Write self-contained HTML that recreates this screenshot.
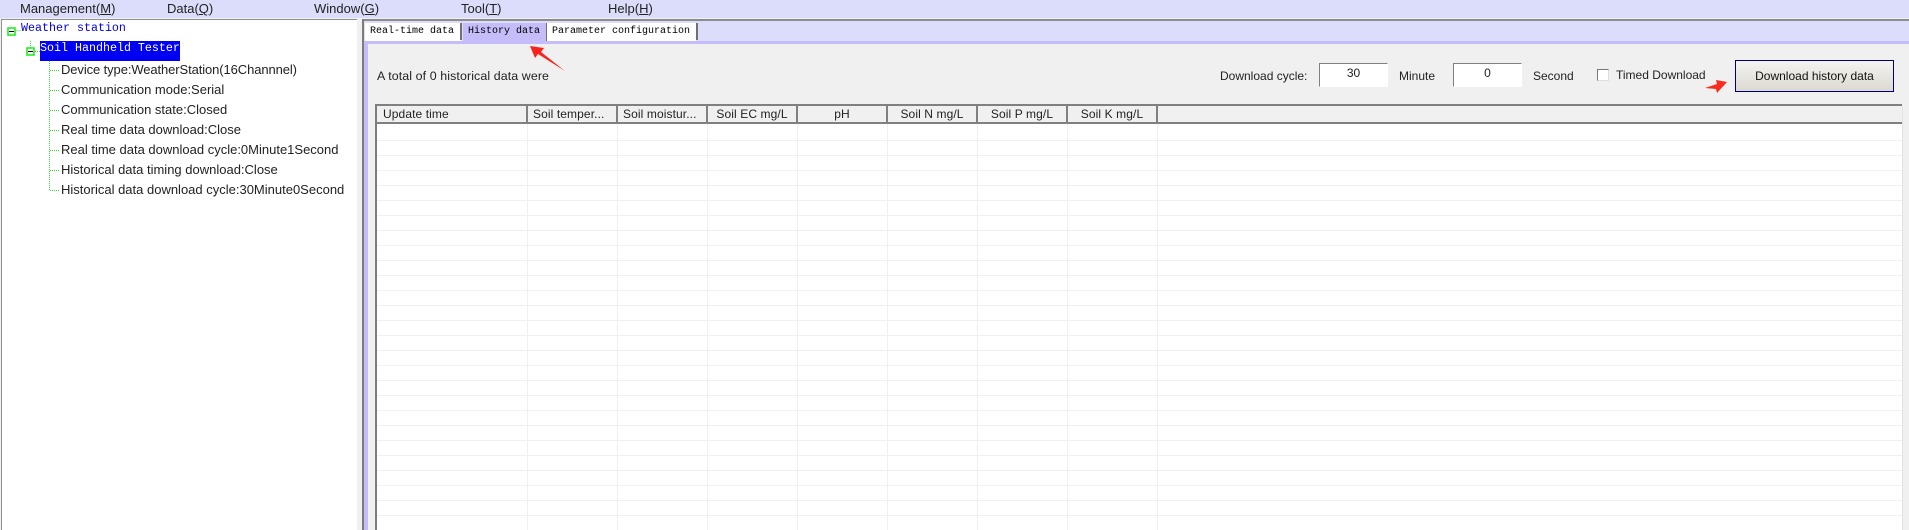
<!DOCTYPE html>
<html><head><meta charset="utf-8">
<style>
html,body{margin:0;padding:0;width:1909px;height:530px;overflow:hidden;background:#f0f0f0}
#r{position:relative;width:1909px;height:530px;overflow:hidden;font-family:"Liberation Sans",sans-serif;font-size:12px;color:#222}
.a{position:absolute}
.t{position:absolute;white-space:nowrap;line-height:16px;height:16px}
.m{position:absolute;top:0;font-size:13px;line-height:18px;white-space:nowrap;color:#222}
u{text-decoration:underline}
.tree{font-size:13px;left:61px;color:#222}
.mono{font-family:"Liberation Mono",monospace}
.tab{position:absolute;top:23px;height:18px;line-height:17px;font-family:"Liberation Mono",monospace;font-size:10px;text-align:left;white-space:nowrap;color:#000}
.hd{position:absolute;top:107px;height:15px;line-height:15px;background:#f0f0f0;text-align:center;font-size:12px;white-space:nowrap;color:#222;letter-spacing:.1px}
.sep{position:absolute;top:105px;width:2px;height:19px;background:#808080}
.inp{position:absolute;top:63px;width:67px;height:22px;background:#fff;border-top:1px solid #808080;border-left:1px solid #808080;border-right:1px solid #fff;border-bottom:1px solid #fff;text-align:center;line-height:18px;font-size:12px}
</style></head>
<body><div id="r">
<div class="a" style="left:0;top:0;width:1909px;height:18px;background:#dcdcfb"></div>
<div class="m" style="left:20px"><span>Management(<u>M</u>)</span></div>
<div class="m" style="left:167px">Data(<u>Q</u>)</div>
<div class="m" style="left:314px">Window(<u>G</u>)</div>
<div class="m" style="left:461px">Tool(<u>T</u>)</div>
<div class="m" style="left:608px">Help(<u>H</u>)</div>

<div class="a" style="left:0;top:18px;width:358px;height:512px;background:#f0f0f0"></div>
<div class="a" style="left:1px;top:19px;width:356px;height:511px;background:#fff;border-left:1px solid #909090;border-top:1px solid #909090;box-sizing:border-box"></div>

<!-- tree -->
<svg class="a" style="left:0;top:0" width="360" height="200">
<g stroke="#33dd33" stroke-width="1" fill="none">
<path d="M16.5 30.5H21" stroke-dasharray="1 1"/>
<path d="M30.5 41V48" stroke-dasharray="1 1"/>
<path d="M35 51.5H40" stroke-dasharray="1 1"/>
<path d="M49.5 61V190" stroke-dasharray="1 1"/>
<path d="M50 70.5H60M50 90.5H60M50 110.5H60M50 130.5H60M50 150.5H60M50 170.5H60M50 190.5H60" stroke-dasharray="1 1"/>
</g>
<rect x="8" y="28" width="7" height="7" fill="#fff" stroke="#22ee22" stroke-width="1.6"/>
<rect x="27" y="48" width="7" height="7" fill="#fff" stroke="#22ee22" stroke-width="1.6"/>
<path d="M9 31.5H14M28 51.5H33" stroke="#000" stroke-width="1"/>
</svg>
<div class="t mono" style="left:21px;top:20px;color:#0000e0;font-size:11.67px">Weather station</div>
<div class="a" style="left:40px;top:41px;width:140px;height:20px;background:#0000f5"></div>
<div class="t mono" style="left:40px;top:40px;color:#fff;font-size:11.67px;font-weight:400">Soil Handheld Tester</div>
<div class="t tree" style="top:62px;letter-spacing:-.1px">Device type:WeatherStation(16Channnel)</div>
<div class="t tree" style="top:82px">Communication mode:Serial</div>
<div class="t tree" style="top:102px">Communication state:Closed</div>
<div class="t tree" style="top:122px">Real time data download:Close</div>
<div class="t tree" style="top:142px">Real time data download cycle:0Minute1Second</div>
<div class="t tree" style="top:162px">Historical data timing download:Close</div>
<div class="t tree" style="top:182px">Historical data download cycle:30Minute0Second</div>

<!-- right side frame -->
<div class="a" style="left:358px;top:18px;width:1551px;height:512px;background:#f0f0f0"></div>
<div class="a" style="left:362px;top:19px;width:1547px;height:2px;background:#8c8c8c"></div>
<div class="a" style="left:362px;top:19px;width:2px;height:511px;background:#7c7c7c"></div>
<div class="a" style="left:364px;top:21px;width:1545px;height:23px;background:#dcdcfb"></div>
<div class="a" style="left:364px;top:41px;width:1545px;height:3px;background:#c4bdfa"></div>
<div class="a" style="left:364px;top:41px;width:4px;height:489px;background:#c4bdfa"></div>

<!-- tabs -->
<div class="tab" style="left:365px;width:96px;background:#fff;padding-left:5px;box-sizing:border-box">Real-time data</div>
<div class="a" style="left:460px;top:23px;width:2px;height:17px;background:#707070"></div>
<div class="tab" style="left:463px;width:83px;background:#c4bdfa;padding-left:5px;box-sizing:border-box;height:19px">History data</div>
<div class="tab" style="left:547px;width:149px;background:#fff;padding-left:5px;box-sizing:border-box">Parameter configuration</div>
<div class="a" style="left:696px;top:23px;width:2px;height:17px;background:#707070"></div>
<div class="a" style="left:546px;top:23px;width:1px;height:18px;background:#707070"></div>

<!-- toolbar -->
<div class="t" style="left:377px;top:68px;font-size:12.4px;letter-spacing:.1px">A total of 0 historical data were</div>
<div class="t" style="left:1220px;top:68px">Download cycle:</div>
<div class="inp" style="left:1319px">30</div>
<div class="t" style="left:1399px;top:68px">Minute</div>
<div class="inp" style="left:1453px">0</div>
<div class="t" style="left:1533px;top:68px">Second</div>
<div class="a" style="left:1597px;top:69px;width:12px;height:12px;box-sizing:border-box;background:#fff;border-top:1px solid #777;border-left:1px solid #777;border-right:1px solid #ddd;border-bottom:1px solid #ddd"></div>
<div class="t" style="left:1616px;top:67px">Timed Download</div>
<div class="a" style="left:1735px;top:60px;width:159px;height:32px;box-sizing:border-box;border:1px solid #000070;background:linear-gradient(#f4f3ef,#dcd9d2);text-align:center;line-height:30px;font-size:12px;color:#111">Download history data</div>

<!-- table -->
<div class="a" style="left:375px;top:105px;width:1527px;height:425px;background:#fff"></div>
<div class="a" style="left:375px;top:105px;width:2px;height:425px;background:#7c7c7c"></div>
<div class="a" style="left:1902px;top:105px;width:1px;height:425px;background:#e2e2e2"></div>
<div class="a" style="left:377px;top:105px;width:1525px;height:19px;background:#f0f0f0"></div>
<div class="a" style="left:375px;top:104px;width:1527px;height:2px;background:#808080"></div>
<div class="a" style="left:375px;top:122px;width:1527px;height:2px;background:#808080"></div>
<div class="hd" style="left:383px;width:130px;text-align:left">Update time</div>
<div class="hd" style="left:533px;width:80px;text-align:left">Soil temper...</div>
<div class="hd" style="left:623px;width:80px;text-align:left">Soil moistur...</div>
<div class="hd" style="left:709px;width:86px">Soil EC mg/L</div>
<div class="hd" style="left:799px;width:86px">pH</div>
<div class="hd" style="left:889px;width:86px">Soil N mg/L</div>
<div class="hd" style="left:979px;width:86px">Soil P mg/L</div>
<div class="hd" style="left:1069px;width:86px">Soil K mg/L</div>
<div class="sep" style="left:526px"></div>
<div class="sep" style="left:616px"></div>
<div class="sep" style="left:706px"></div>
<div class="sep" style="left:796px"></div>
<div class="sep" style="left:886px"></div>
<div class="sep" style="left:976px"></div>
<div class="sep" style="left:1066px"></div>
<div class="sep" style="left:1156px"></div>
<svg class="a" style="left:0;top:0" width="1909" height="530">
<g stroke="#f0f0f0" stroke-width="1">
<path d="M377 140.5H1902M377 155.5H1902M377 170.5H1902M377 185.5H1902M377 200.5H1902M377 215.5H1902M377 230.5H1902M377 245.5H1902M377 260.5H1902M377 275.5H1902M377 290.5H1902M377 305.5H1902M377 320.5H1902M377 335.5H1902M377 350.5H1902M377 365.5H1902M377 380.5H1902M377 395.5H1902M377 410.5H1902M377 425.5H1902M377 440.5H1902M377 455.5H1902M377 470.5H1902M377 485.5H1902M377 500.5H1902M377 515.5H1902"/>
<path d="M527.5 124V530M617.5 124V530M707.5 124V530M797.5 124V530M887.5 124V530M977.5 124V530M1067.5 124V530M1157.5 124V530"/>
</g>
<!-- arrows -->
<path d="M530 46L544 48L541 52L565 71L538 54L535 58Z" fill="#f8231c"/>
<path d="M1727 82L1716 80L1717 84L1705 88L1716 89L1717 93Z" fill="#fb2a1e"/>
</svg>
</div></body></html>
